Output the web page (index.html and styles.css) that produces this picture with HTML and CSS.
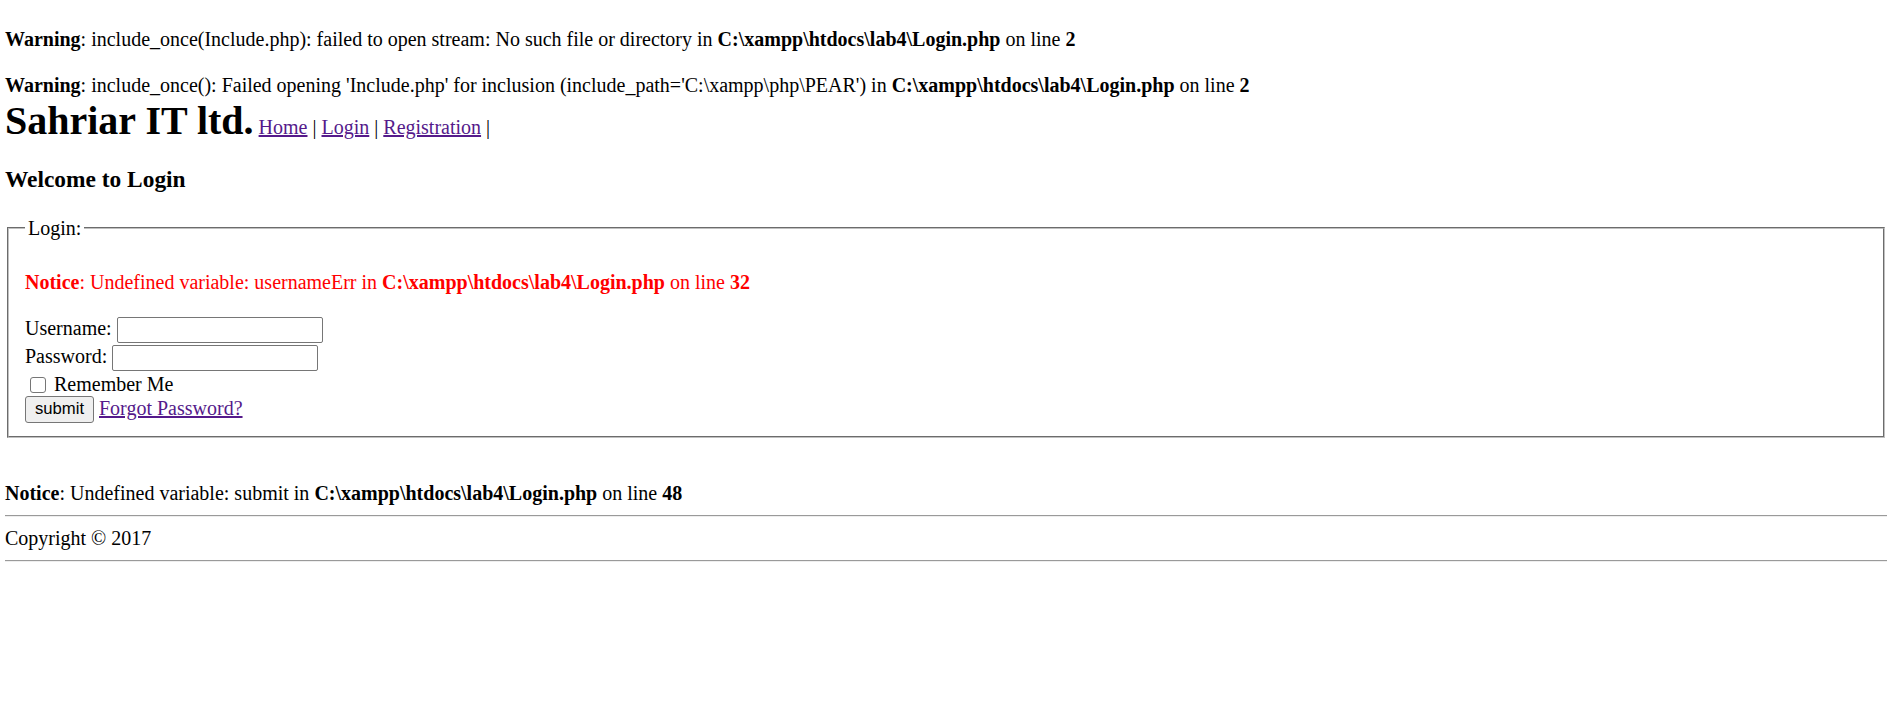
FILE: index.html
```html
<!DOCTYPE html>
<html>
<head>
<meta charset="utf-8">
<title>Login</title>
<link rel="stylesheet" href="styles.css">
</head>
<body>
<div class="page">
  <p class="php-msg"><b>Warning</b>: include_once(Include.php): failed to open stream: No such file or directory in <b>C:\xampp\htdocs\lab4\Login.php</b> on line <b>2</b></p>
  <p class="php-msg"><b>Warning</b>: include_once(): Failed opening 'Include.php' for inclusion (include_path='C:\xampp\php\PEAR') in <b>C:\xampp\htdocs\lab4\Login.php</b> on line <b>2</b></p>
  <div class="brand-line"><span class="brand">Sahriar IT ltd.</span> <a class="nav-link" href="#">Home</a> | <a class="nav-link" href="#">Login</a> | <a class="nav-link" href="#">Registration</a> |</div>
  <h3 class="welcome">Welcome to Login</h3>
  <fieldset class="login-box">
    <legend class="login-legend">Login:</legend>
    <p class="php-msg php-red"><b>Notice</b>: Undefined variable: usernameErr in <b>C:\xampp\htdocs\lab4\Login.php</b> on line <b>32</b></p>
    <div class="form-row field-row">
      <span class="field-label">Username:</span>
      <input class="text-input" type="text">
    </div>
    <div class="form-row field-row">
      <span class="field-label">Password:</span>
      <input class="text-input" type="password">
    </div>
    <div class="form-row check-row">
      <input class="check" type="checkbox">
      <span class="field-label">Remember Me</span>
    </div>
    <div class="form-row submit-row">
      <button class="submit-btn" type="button">submit</button>
      <a class="nav-link forgot" href="#">Forgot Password?</a>
    </div>
  </fieldset>
  <p class="php-msg after-form"><b>Notice</b>: Undefined variable: submit in <b>C:\xampp\htdocs\lab4\Login.php</b> on line <b>48</b></p>
  <hr class="rule rule-first">
  <div class="copyright">Copyright © 2017</div>
  <hr class="rule rule-second">
</div>
</body>
</html>
```

FILE: styles.css
```css
html, body {
  margin: 0;
  background: #ffffff;
}

body {
  font-family: "Liberation Serif", "Times New Roman", serif;
  font-size: 20px;
  line-height: 23px;
  color: #000000;
}

.page {
  padding: 5px 10px 0 5px;
}

.php-msg {
  margin: 0;
  padding-top: 23px;
}

.php-red {
  color: #ff0000;
}

.brand-line {
  margin: 0;
  padding-top: 3.5px;
  line-height: 23px;
}

.brand {
  font-size: 40px;
  font-weight: bold;
  line-height: 40px;
}

.nav-link {
  color: #551a8b;
  text-decoration: underline;
}

.welcome {
  font-size: 23.4px;
  line-height: 27px;
  font-weight: bold;
  margin: 25.7px 0 23.8px;
}

.login-box {
  margin: 0 2px;
  padding: 8.4px 16px 13px;
  border: 2px groove #c0c0c0;
  min-width: 0;
}

.login-legend {
  padding: 0 3px;
  line-height: 23px;
}

.form-row {
  display: flex;
  align-items: flex-start;
}

.field-row {
  height: 27px;
  gap: 5px;
}

.field-row:first-of-type {
  height: 28.2px;
  margin-top: 21.4px;
}

.field-row .field-label {
  margin-top: 1px;
}

.text-input {
  box-sizing: border-box;
  width: 206px;
  height: 26px;
  margin: 1px 0 0;
  padding: 1px 2px;
  border: 1px solid #767676;
  border-radius: 2px;
  background: #ffffff;
  font: 16.7px "Liberation Sans", Arial, sans-serif;
}

.check-row {
  height: 25px;
}

.check {
  appearance: none;
  -webkit-appearance: none;
  box-sizing: border-box;
  width: 16px;
  height: 16px;
  margin: 6px 8px 0 5px;
  border: 1px solid #767676;
  border-radius: 3px;
  background: #ffffff;
}

.check-row .field-label {
  margin-top: 2.5px;
}

.submit-row {
  gap: 5px;
}

.submit-btn {
  box-sizing: border-box;
  height: 27px;
  width: 69px;
  margin: 0;
  padding: 0 8px;
  border: 1px solid #767676;
  border-radius: 3px;
  background: #efefef;
  color: #000000;
  font: 16.7px "Liberation Sans", Arial, sans-serif;
}

.forgot {
  margin-top: 1px;
}

.after-form {
  margin-top: 20.9px;
}

.rule {
  height: 0;
  margin: 0;
  border: 0;
  border-top: 1px solid #9a9a9a;
  border-bottom: 1px solid #eeeeee;
}

.rule-first {
  margin-top: 10px;
}

.copyright {
  margin-top: 10.2px;
}

.rule-second {
  margin-top: 10px;
}
```
